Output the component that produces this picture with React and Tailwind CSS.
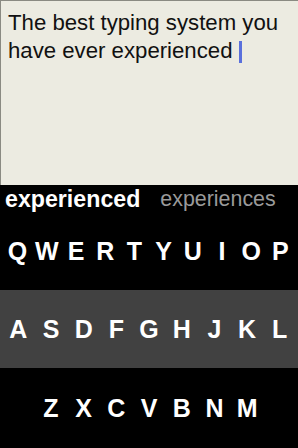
import React from "react";

const font = { fontFamily: '"Liberation Sans", Arial, sans-serif' };

function Row({ letters, className }) {
  return (
    <div className={className}>
      {letters.map((l) => (
        <div key={l} className="flex items-center justify-center text-white font-bold text-[25px] leading-none">
          {l}
        </div>
      ))}
    </div>
  );
}

export default function App() {
  return (
    <div className="w-[298px] h-[448px] flex flex-col bg-black overflow-hidden" style={font}>
      <div className="h-[185px] bg-[#ecebe1] border-t border-l border-[#8a8a82] pl-[7px] pt-[8px] text-[22.2px] leading-[28px] text-[#111111]">
        The best typing system you have ever experienced{" "}
        <span className="inline-block w-[3px] h-[22px] bg-[#5a70dc] align-[-5px]"></span>
      </div>
      <div className="h-[28px] flex items-start pt-[1px] pl-[5px] gap-[20px] leading-[27px] whitespace-nowrap">
        <span className="text-white font-bold text-[23.2px]">experienced</span>
        <span className="text-[#9a9a9a] text-[21.4px]">experiences</span>
      </div>
      <Row
        letters={["Q", "W", "E", "R", "T", "Y", "U", "I", "O", "P"]}
        className="h-[77px] grid grid-cols-10 px-[3px]"
      />
      <Row
        letters={["A", "S", "D", "F", "G", "H", "J", "K", "L"]}
        className="h-[78px] grid grid-cols-9 px-[2px] bg-[#414141]"
      />
      <div className="flex-1 flex justify-center">
        <Row
          letters={["Z", "X", "C", "V", "B", "N", "M"]}
          className="w-[229px] grid grid-cols-7"
        />
      </div>
    </div>
  );
}
